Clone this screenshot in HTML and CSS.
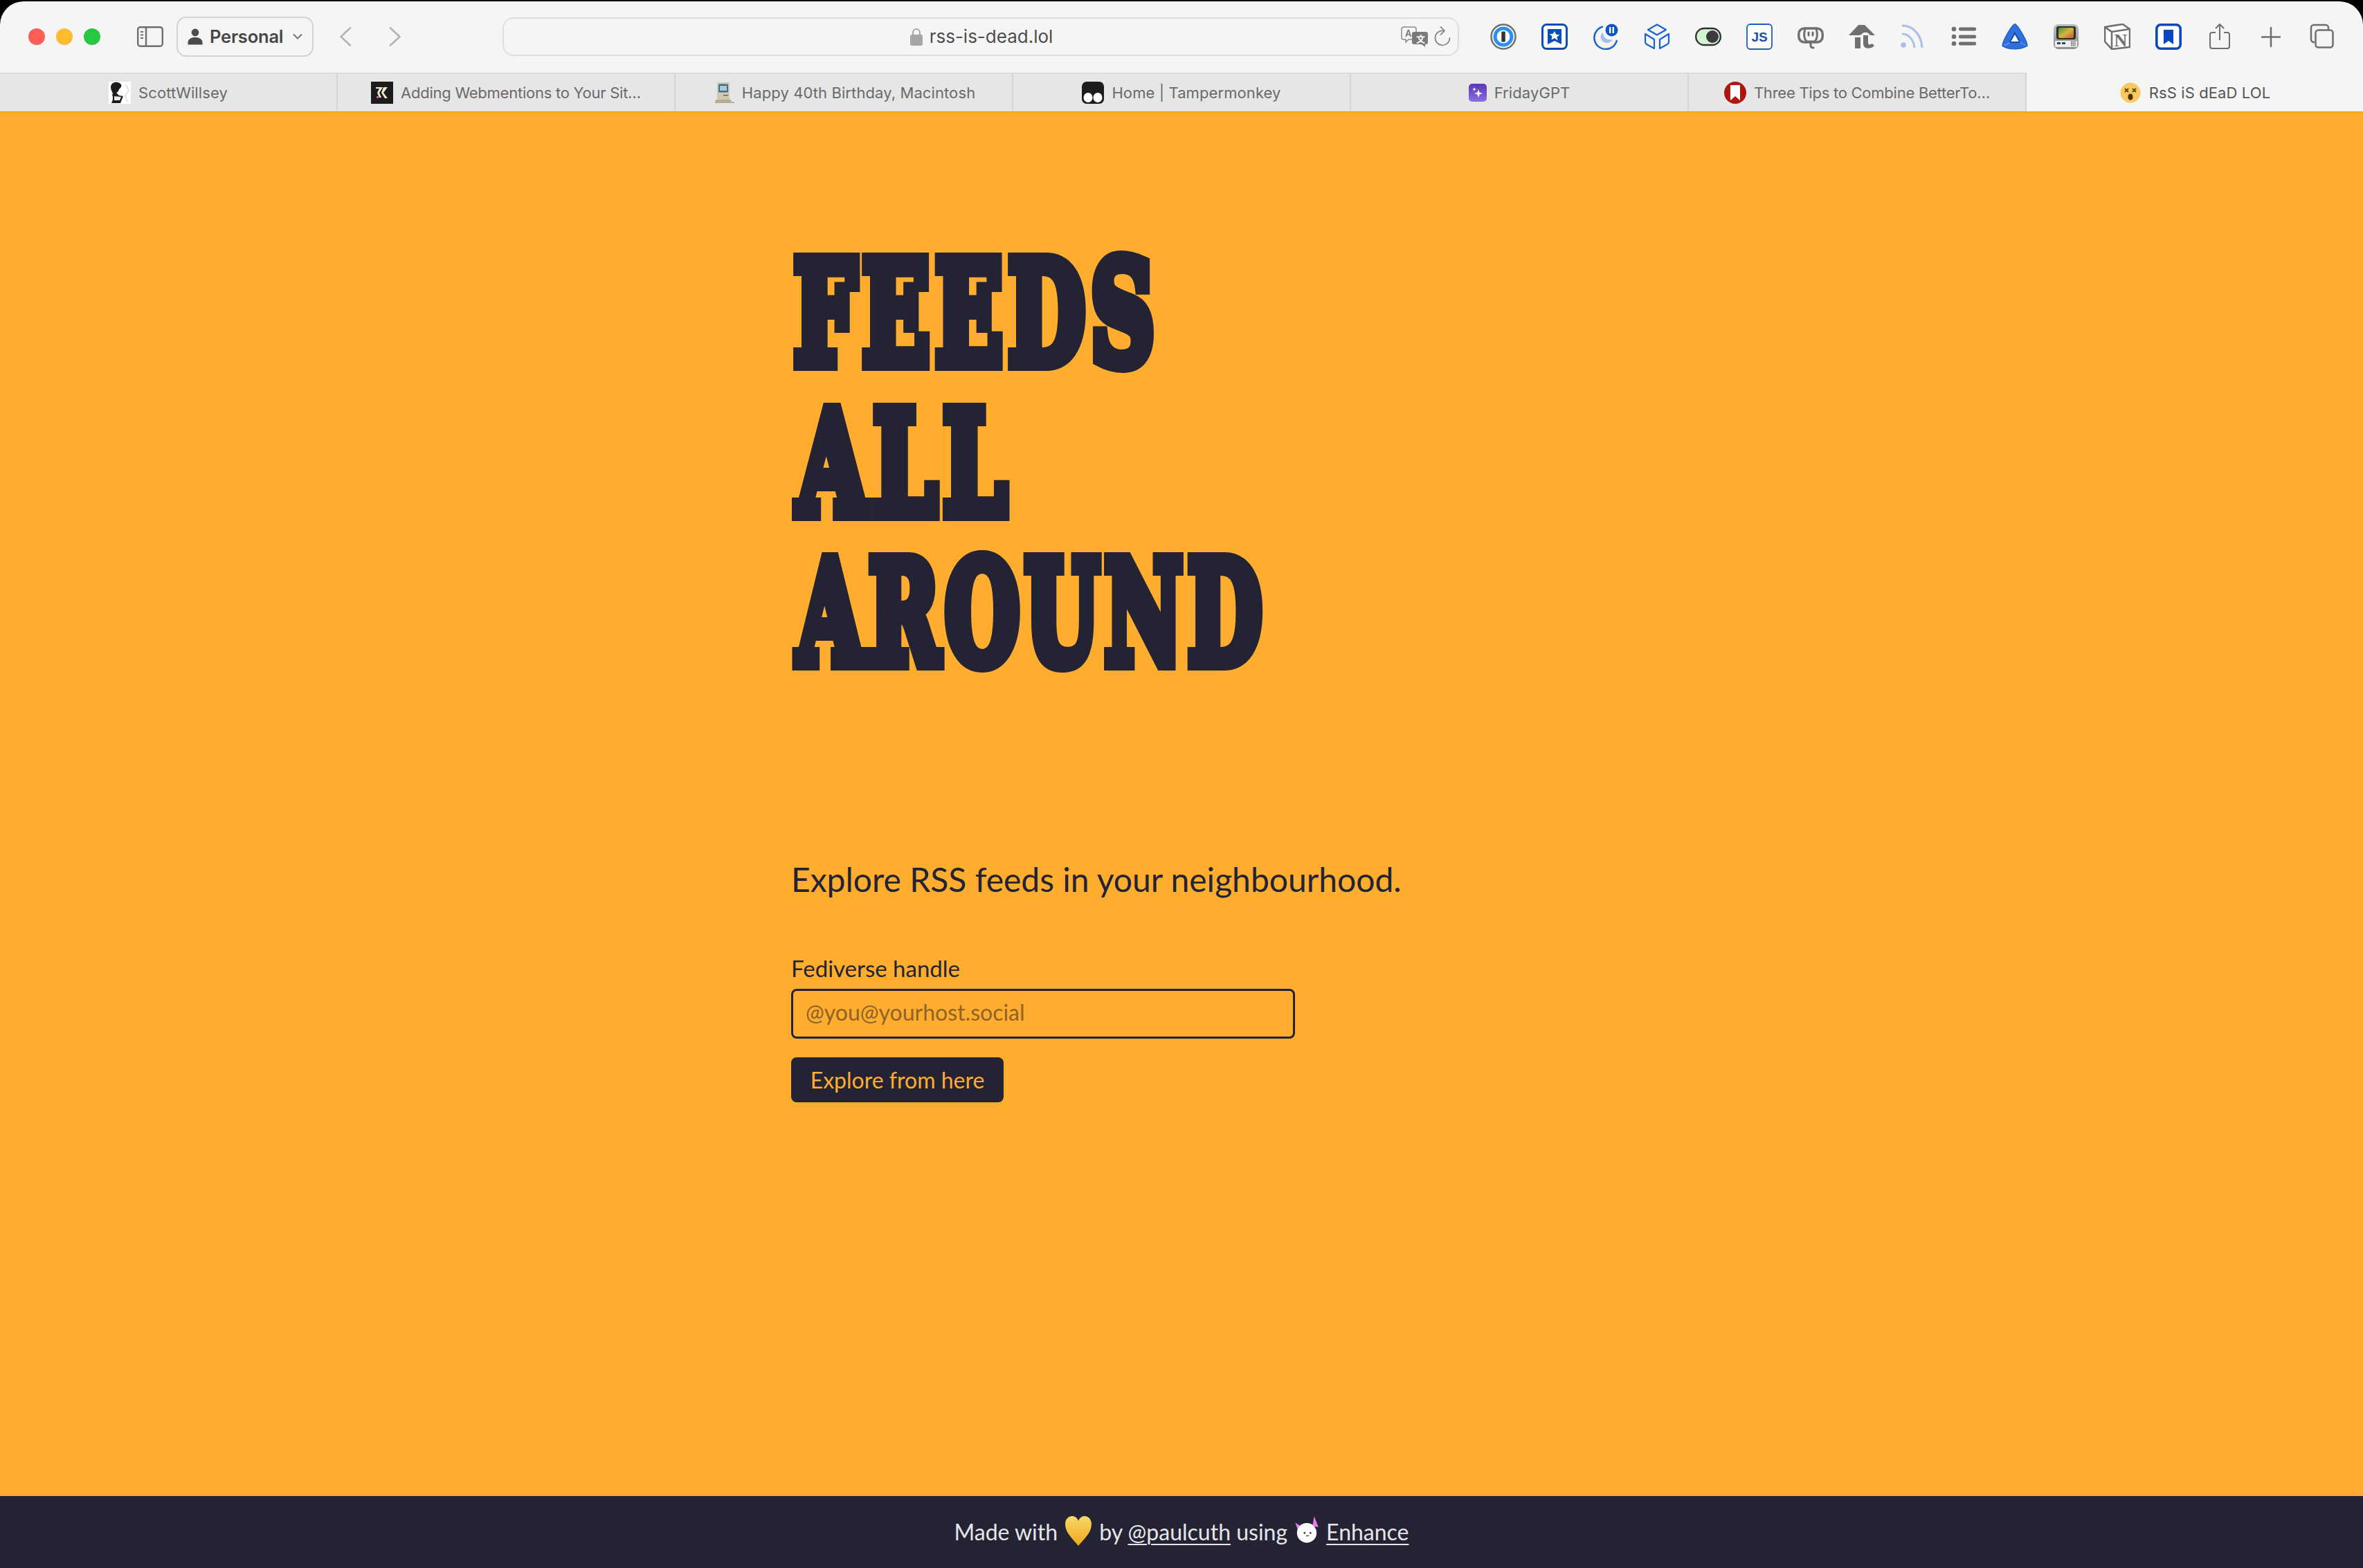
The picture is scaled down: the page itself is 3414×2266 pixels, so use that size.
FILE: index.html
```html
<!DOCTYPE html>
<html lang="en">
<head>
<meta charset="utf-8">
<title>RsS iS dEaD LOL</title>
<link rel="stylesheet" href="styles.css">
</head>
<body>
<div class="window">
  <header class="chrome">
    <div class="toolbar">
      <div class="lights"><i class="light red"></i><i class="light amber"></i><i class="light green"></i></div>
      <svg class="sidebar-icon" viewBox="0 0 38 30"><rect x="1.2" y="1.2" width="35.6" height="27.6" rx="3.5" fill="none" stroke="#6e6e6e" stroke-width="2.4"/><path d="M13 1v28" stroke="#6e6e6e" stroke-width="2.4"/><path d="M5 8h4M5 12.5h4M5 17h4" stroke="#6e6e6e" stroke-width="2"/></svg>
      <div class="profile">
        <svg class="profile-icon" viewBox="0 0 22 24"><circle cx="11" cy="6" r="5.4" fill="#4b4b4b"/><path d="M0.5 23.5v-3c0-5 4.500-7.500 10.500-7.500s10.500 2.500 10.500 7.500v3z" fill="#4b4b4b"/></svg>
        <span class="profile-name">Personal</span>
        <svg class="profile-caret" viewBox="0 0 14 9"><path d="M1 1.500l6 6 6-6" fill="none" stroke="#777" stroke-width="2"/></svg>
      </div>
      <svg class="nav-icon back" viewBox="0 0 18 28"><path d="M16 1.500L2.500 14 16 26.500" fill="none" stroke="#b3b3b3" stroke-width="2.600" stroke-linecap="round" stroke-linejoin="round"/></svg>
      <svg class="nav-icon forward" viewBox="0 0 18 28"><path d="M2 1.500L15.500 14 2 26.500" fill="none" stroke="#b3b3b3" stroke-width="2.600" stroke-linecap="round" stroke-linejoin="round"/></svg>
      <div class="urlbar">
        <span></span>
        <div class="url">
          <svg class="lock" viewBox="0 0 18 26"><path d="M4 12V7a5 5 0 0 1 10 0v5" fill="none" stroke="#a6a6a6" stroke-width="2"/><rect y="10" width="18" height="16" rx="2.500" fill="#a6a6a6"/></svg>
          <span>rss-is-dead.lol</span>
        </div>
        <div class="url-actions">
          <svg class="translate" viewBox="0 0 40 30"><path d="M4 1h15a3 3 0 0 1 3 3v12a3 3 0 0 1-3 3H11l-4 4v-4H4a3 3 0 0 1-3-3V4a3 3 0 0 1 3-3z" fill="#f5f5f5" stroke="#8a8a8a" stroke-width="1.500"/><text x="6" y="15" class="tr-a">A</text><path d="M19 8h17a3 3 0 0 1 3 3v12a3 3 0 0 1-3 3h-1v4l-5-4H19a3 3 0 0 1-3-3V11a3 3 0 0 1 3-3z" fill="#7a7a7a"/><text x="22" y="23" class="tr-b">文</text></svg>
          <svg class="reload" viewBox="0 0 24 30"><path d="M14 6.500a10.500 10.500 0 1 0 8.500 10.500" fill="none" stroke="#8a8a8a" stroke-width="1.800" stroke-linecap="round"/><path d="M9.500 1l5.500 5.500L9.500 12" fill="none" stroke="#8a8a8a" stroke-width="1.800" stroke-linecap="round" stroke-linejoin="round"/></svg>
        </div>
      </div>
      <div class="extensions">
        <svg class="ext" viewBox="0 0 38 38"><circle cx="19" cy="19" r="17.500" fill="#fff" stroke="#6f6f6f" stroke-width="2.500"/><circle cx="19" cy="19" r="12" fill="#fff" stroke="#2a90f2" stroke-width="5"/><rect x="16.300" y="11.500" width="5.500" height="15" rx="1" fill="#333"/></svg>
        <svg class="ext" viewBox="0 0 38 38"><rect x="1.500" y="1.500" width="35" height="35" rx="6" fill="#fff" stroke="#0a4fb5" stroke-width="3"/><path d="M9 8h20v22l-10-5-10 5z" fill="#0a4fb5"/><path d="M19 11l2.200 4.800 5.100.5-3.900 3.300 1.200 5L19 21l-4.600 2.600 1.200-5-3.900-3.300 5.100-.5z" fill="#fff"/></svg>
        <svg class="ext" viewBox="0 0 38 38"><path d="M15 4.500A16.500 16.500 0 1 0 35 24" fill="none" stroke="#1a63cc" stroke-width="2.500"/><path d="M15 13c-6 4-4 14 5 15 4 0 7-2 9-5-8 2-14-3-14-10z" fill="#a3bdee"/><circle cx="27.500" cy="9.500" r="9" fill="#0b55c4"/><rect x="24" y="5" width="2.400" height="9" fill="#fff"/><rect x="28.600" y="5" width="2.400" height="9" fill="#fff"/></svg>
        <svg class="ext" viewBox="0 0 38 38"><path d="M19 1.500L32 9 19 16.500 6 9zM2 15l13 8v13l-11-6c-1-.6-2-1.500-2-3zM36 15l-13 8v13l11-6c1-.6 2-1.500 2-3z" fill="none" stroke="#1a63cc" stroke-width="2.200" stroke-linejoin="round"/></svg>
        <svg class="ext" viewBox="0 0 38 38"><rect x="1.200" y="7" width="35.600" height="24" rx="12" fill="#d3f5d2" stroke="#333" stroke-width="2.400"/><circle cx="25" cy="19" r="9" fill="#3a3a3f"/></svg>
        <svg class="ext" viewBox="0 0 38 38"><rect x="1" y="1" width="36" height="36" rx="5" fill="#fff" stroke="#1a5ec2" stroke-width="1.800"/><text x="19" y="26" text-anchor="middle" class="js">JS</text></svg>
        <svg class="ext" viewBox="0 0 38 38"><rect x="1.800" y="7" width="34.400" height="20" rx="8" fill="none" stroke="#6f6f6f" stroke-width="3.500"/><path d="M11 8c-2 6-2 13 2 18h12c4-5 4-12 2-18" fill="none" stroke="#6f6f6f" stroke-width="3"/><path d="M19 27v5c0 2 2 3 4 3" fill="none" stroke="#6f6f6f" stroke-width="3" stroke-linecap="round"/><path d="M16 13v4M22 13v4" stroke="#6f6f6f" stroke-width="3" stroke-linecap="round"/></svg>
        <svg class="ext" viewBox="0 0 38 38"><path d="M0 17L14 2h9l15 15h-7c-3-5-9-6-13-1l-3 1z" fill="#6f6f6f"/><path d="M9 20h8v16H9z" fill="#6f6f6f"/><path d="M21 17h7v11c0 3 3 3 6 1l3 3c-4 5-16 6-16-3z" fill="#6f6f6f"/></svg>
        <svg class="ext" viewBox="0 0 38 38"><g fill="none" stroke="#a8bfe8" stroke-width="3"><path d="M4 3c16 0 28 13 29 32"/><path d="M4 15c10 0 17 9 18 20"/></g><circle cx="6" cy="31" r="3.800" fill="#a8bfe8"/></svg>
        <svg class="ext" viewBox="0 0 38 38"><g fill="#6f6f6f"><circle cx="5" cy="8" r="3.300"/><circle cx="5" cy="19" r="3.300"/><circle cx="5" cy="29" r="3.300"/><rect x="12" y="5.500" width="25" height="5" rx="2"/><rect x="12" y="16.500" width="25" height="5" rx="2"/><rect x="12" y="26.500" width="25" height="5" rx="2"/></g></svg>
        <svg class="ext" viewBox="0 0 38 38"><path d="M19 .5c3 1 6 6 9 11 4 7 9 14 9 21-6 3-12 4.500-18 4.500S6 35.500 1 32.500c0-7 5-14 9-21 3-5 6-10 9-11z" fill="#2f70de" stroke="#1658c4" stroke-width="1.200"/><path d="M19 14l7.500 13h-15z" fill="#fff" stroke="#104aa8" stroke-width="2"/><path d="M3 31c5 0 7-2 9-4M35 31c-6-1-8-4-9-5" fill="none" stroke="#6f9cec" stroke-width="1.200"/></svg>
        <svg class="ext" viewBox="0 0 38 38"><defs><linearGradient id="scr" x1="0" y1="0" x2="1" y2="1"><stop offset="0" stop-color="#4f8a4a"/><stop offset=".5" stop-color="#d5b53a"/><stop offset="1" stop-color="#c8553a"/></linearGradient><linearGradient id="case" x1="0" y1="0" x2="0" y2="1"><stop offset="0" stop-color="#b9bcc0"/><stop offset="1" stop-color="#8c8f94"/></linearGradient></defs><rect x="1" y="1" width="36" height="36" rx="7" fill="url(#case)"/><rect x="5" y="4" width="28" height="19" rx="3" fill="#2b2f2c"/><rect x="8" y="6" width="22" height="15" rx="2" fill="url(#scr)"/><rect x="3" y="25" width="32" height="9" rx="1" fill="#eceded"/><rect x="6" y="27" width="5" height="3" fill="#444"/><rect x="13" y="27" width="5" height="3" fill="#444"/><path d="M26 26.500h7M26 29h7M26 31.500h7" stroke="#444" stroke-width="1.400" stroke-dasharray="1.500 1"/></svg>
        <svg class="ext" viewBox="0 0 38 38"><path d="M1 5L27 1l10 7v26l-26 3L1 26z" fill="#fff" stroke="#6f6f6f" stroke-width="2.600" stroke-linejoin="round"/><path d="M1 5l10 7 26-4M11 12v25" fill="none" stroke="#6f6f6f" stroke-width="2.600"/><text x="24" y="33" text-anchor="middle" class="notion">N</text></svg>
        <svg class="ext" viewBox="0 0 38 38"><rect x="1.800" y="1.800" width="34.400" height="34.400" rx="6" fill="#fff" stroke="#0a46bf" stroke-width="3.600"/><path d="M12 9h14v21l-7-5-7 5z" fill="#0a46bf"/></svg>
        <svg class="ext share" viewBox="0 0 32 38"><path d="M10 13H5a3 3 0 0 0-3 3v17a3 3 0 0 0 3 3h22a3 3 0 0 0 3-3V16a3 3 0 0 0-3-3h-5" fill="none" stroke="#6f6f6f" stroke-width="2"/><path d="M16 1v23M10 7l6-6 6 6" fill="none" stroke="#6f6f6f" stroke-width="2"/></svg>
        <svg class="ext" viewBox="0 0 38 38"><path d="M19 6v27M6 19.500h26" stroke="#6f6f6f" stroke-width="2.600" stroke-linecap="round"/></svg>
        <svg class="ext" viewBox="0 0 38 38"><path d="M8 27H7a4 4 0 0 1-4-4V6a4 4 0 0 1 4-4h17a4 4 0 0 1 4 4v4" fill="none" stroke="#6f6f6f" stroke-width="2.500"/><rect x="9.500" y="9.500" width="25" height="25" rx="4" fill="none" stroke="#6f6f6f" stroke-width="2.500"/></svg>
      </div>
    </div>
    <nav class="tabs">
      <div class="tab"><svg class="favicon" viewBox="0 0 32 32"><rect width="32" height="32" fill="#fff"/><path d="M3 8c0-6 6-8 10-7 5 1 7 5 4 8-3 2-2 6-6 7l4 4 6 1-4 10H4c2-4 3-8 1-12 3-2-2-5-2-11z" fill="#1c1c1c"/><path d="M8 21l10 1-2 5H8z" fill="#e8e8e8"/><path d="M25 4l4 9-5 7 3 9" fill="none" stroke="#c8c8c8"/></svg><span>ScottWillsey</span></div>
      <div class="tab tight"><svg class="favicon" viewBox="0 0 32 32"><rect width="32" height="32" fill="#1f1d1c"/><path d="M7 8h10l-5 8 3 7h-3l-3-7 3-6H7zM18 8h6l-6 8 6 8h-4l-5-8z" fill="#f3e8d0"/><rect x="8" y="21" width="3" height="3" fill="#e04bc0"/></svg><span>Adding Webmentions to Your Sit…</span></div>
      <div class="tab"><svg class="favicon" viewBox="0 0 32 32"><path d="M7 1h18v25H7z" fill="#cfc9b2"/><rect x="9" y="3.500" width="14" height="12" rx="1.500" fill="#3f6f86"/><rect x="11" y="6" width="10" height="7" fill="#a9c8d8"/><rect x="16" y="19" width="7" height="1.500" fill="#6a6655"/><path d="M5 26h22l1 5H4z" fill="#b5ae94"/><rect x="28" y="29" width="4" height="2" rx="1" fill="#aaa"/></svg><span>Happy 40th Birthday, Macintosh</span></div>
      <div class="tab"><svg class="favicon" viewBox="0 0 32 32"><rect width="32" height="32" rx="7" fill="#1d1d1d"/><ellipse cx="9" cy="23" rx="6.500" ry="7" fill="#fff"/><ellipse cx="23" cy="23" rx="6.500" ry="7" fill="#fff"/></svg><span>Home | Tampermonkey</span></div>
      <div class="tab"><svg class="favicon friday" viewBox="0 0 26 26"><defs><linearGradient id="fr" x1="0" y1="0" x2="0" y2="1"><stop offset="0" stop-color="#5a35b8"/><stop offset="1" stop-color="#8c70e0"/></linearGradient></defs><rect width="26" height="26" rx="5" fill="url(#fr)"/><path d="M14 8l1.500 4.500L20 14l-4.500 1.500L14 20l-1.500-4.500L8 14l4.500-1.500z" fill="#fff"/><path d="M8 5l.8 2.200L11 8l-2.200.8L8 11l-.8-2.200L5 8l2.200-.8z" fill="#fff"/></svg><span>FridayGPT</span></div>
      <div class="tab tight"><svg class="favicon" viewBox="0 0 32 32"><circle cx="16" cy="16" r="16" fill="#ad1710"/><path d="M9 5h14v22l-7-6-7 6z" fill="#fff"/></svg><span>Three Tips to Combine BetterTo…</span></div>
      <div class="tab active"><svg class="favicon" viewBox="0 0 32 32"><circle cx="16" cy="16" r="14.500" fill="#f7ca5e"/><path d="M8 10l5 5M13 10l-5 5M19 10l5 5M24 10l-5 5" stroke="#5a4510" stroke-width="1.800"/><ellipse cx="16" cy="22" rx="3.500" ry="4.500" fill="#4a3208"/></svg><span>RsS iS dEaD LOL</span></div>
    </nav>
  </header>
  <main class="main">
    <h1 class="title">
      <span class="line feeds">FEEDS</span>
      <span class="line all">ALL</span>
      <span class="line around">AROUND</span>
    </h1>
    <p class="lede">Explore RSS feeds in your neighbourhood.</p>
    <form class="form">
      <label class="field-label" for="handle">Fediverse handle</label>
      <input class="field" id="handle" type="text" placeholder="@you@yourhost.social">
      <button class="submit" type="button">Explore from here</button>
    </form>
  </main>
  <footer class="footer">
    <span>Made with</span>
    <svg class="heart" viewBox="0 0 40 44"><defs><linearGradient id="ht" x1="0" y1="0" x2="0" y2="1"><stop offset="0" stop-color="#f8d868"/><stop offset="1" stop-color="#f0a81c"/></linearGradient></defs><path d="M20 43C12 33 1 24 1 12 1 4 6 0 11 0c4 0 7 2 9 7 2-5 5-7 9-7 5 0 10 4 10 12 0 12-11 21-19 31z" fill="url(#ht)"/></svg>
    <span>by <a href="#">@paulcuth</a> using</span>
    <svg class="axol" viewBox="0 0 34 38"><path d="M13 17L1 10l5 13z" fill="#e77be8"/><path d="M25 15l2-14 6 15z" fill="#e77be8"/><circle cx="17" cy="24" r="13.500" fill="#fff"/><circle cx="14" cy="24" r="1.300" fill="#333"/><circle cx="22" cy="24" r="1.300" fill="#333"/><path d="M16 28h4" stroke="#333" stroke-width="1.200"/></svg>
    <a href="#">Enhance</a>
  </footer>
</div>
</body>
</html>
```

FILE: styles.css
```css
* { box-sizing: border-box; }
html, body { margin: 0; height: 100%; background: #000; }
body { overflow: hidden; }

.window { height: 2266px; display: flex; flex-direction: column; padding-top: 2px; }

.chrome { border-radius: 34px 34px 0 0; overflow: hidden; background: #f5f5f5; font-family: Inter, "Liberation Sans", sans-serif; }
.toolbar { height: 103px; display: flex; align-items: center; position: relative; }
.lights { display: flex; gap: 16px; margin-left: 41px; margin-top: -2px; }
.light { width: 24px; height: 24px; border-radius: 50%; }
.red { background: #fd5f57; }
.amber { background: #febb2e; }
.green { background: #27c840; }
.sidebar-icon { width: 38px; height: 30px; margin-left: 53px; margin-top: -2px; }
.profile { width: 198px; height: 58px; margin-left: 19px; margin-top: -2px; border: 2px solid #d2d2d2; border-radius: 14px; display: flex; align-items: center; padding-left: 14px; color: #474747; }
.profile-icon { width: 22px; height: 24px; }
.profile-name { margin-left: 10px; font-size: 25.5px; font-weight: 600; letter-spacing: -.2px; }
.profile-caret { width: 14px; height: 9px; margin-left: 14px; }
.nav-icon { width: 18px; height: 28px; margin-top: -2px; }
.back { margin-left: 37px; }
.forward { margin-left: 54px; }
.urlbar { width: 1382px; height: 56px; margin-left: 146px; margin-top: -2px; border: 2px solid #dedede; border-radius: 16px; display: grid; grid-template-columns: 1fr auto 1fr; align-items: center; padding-right: 10px; }
.url { display: flex; align-items: center; gap: 10px; font-size: 26px; color: #4d4d4d; padding-left: 12px; }
.lock { width: 18px; height: 26px; }
.url-actions { display: flex; justify-content: flex-end; align-items: center; gap: 8px; }
.translate { width: 40px; height: 30px; }
.reload { width: 24px; height: 30px; }
.tr-a { font: 600 13px Inter, sans-serif; fill: #777; }
.tr-b { font: 600 13px "Noto Sans CJK SC", sans-serif; fill: #fff; }

.extensions { margin-left: 27px; display: grid; grid-template-columns: repeat(17, 73.95px); justify-items: center; margin-top: -2px; }
.ext { width: 38px; height: 38px; display: block; }
.js { font: 700 19px "Liberation Sans", sans-serif; fill: #1a4fb0; }
.notion { font: 700 26px "Liberation Serif", serif; fill: #6f6f6f; }

.tabs { display: grid; grid-template-columns: repeat(6, 488px) 1fr; height: 56px; background: #e6e6e6; box-shadow: inset 0 2px 1px -1px #cfcfcf; }
.tab { display: flex; align-items: center; justify-content: center; gap: 11px; font-size: 22px; letter-spacing: .1px; color: #6a6a6a; border-right: 2px solid #d6d6d6; padding-top: 1px; }
.tab.tight { letter-spacing: -.25px; }
.tab.active { background: #f5f5f5; border-right: 0; color: #555; box-shadow: none; }
.favicon { width: 32px; height: 32px; flex: none; }
.friday { width: 26px; height: 26px; }

.main { flex: 1; background: #ffad2f; border-top: 1px solid #e8962a; padding: 183px 0 0 1143px; color: #232334; font-family: Lato, sans-serif; }
.title { margin: 0; font: 700 205px/216.5px "DejaVu Serif", serif; letter-spacing: 14px; -webkit-text-stroke: 22px #232334; }
.line { display: block; width: max-content; transform-origin: 0 50%; white-space: nowrap; }
.feeds { transform: translateX(4px) scaleX(.62); }
.all { transform: translateX(9px) scaleX(.636); }
.around { transform: translateX(9px) scaleX(.598); }
.lede { margin: 246px 0 0; font-size: 48px; line-height: 60px; }
.form { margin-top: 78px; display: flex; flex-direction: column; align-items: flex-start; }
.field-label { font-size: 33px; line-height: 40px; }
.field { width: 728px; height: 72px; margin-top: 10px; padding: 0 18px 4px; border: 3px solid #232334; border-radius: 8px; background: transparent; font: 32px Lato, sans-serif; color: #232334; outline: 0; }
.field::placeholder { color: #8f6227; opacity: 1; }
.submit { width: 307px; height: 65px; margin-top: 27px; border: 0; border-radius: 8px; background: #232334; color: #ffad2f; font: 32px Lato, sans-serif; padding: 0; }

.footer { height: 104px; background: #232334; color: #e6e6ea; display: flex; align-items: center; justify-content: center; gap: 10px; font: 32px Lato, sans-serif; padding-bottom: 2px; }
.footer a { color: inherit; text-decoration: underline; text-underline-offset: 5px; text-decoration-thickness: 2px; }
.heart { width: 40px; height: 44px; }
.axol { width: 36px; height: 40px; margin-top: -6px; }
```
